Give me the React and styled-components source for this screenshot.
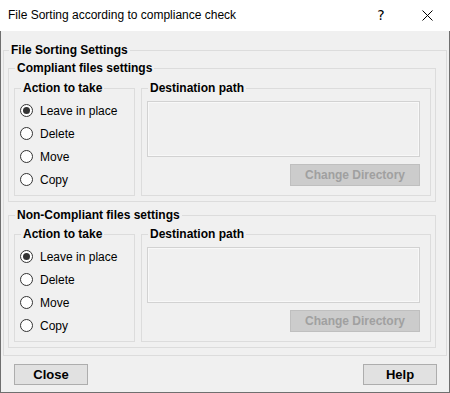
import React from "react";
import styled, { createGlobalStyle } from "styled-components";

const GlobalStyle = createGlobalStyle`
  html, body {
    margin: 0;
    padding: 0;
    background: #f0f0f0;
  }
  body {
    font-family: "Liberation Sans", Arial, sans-serif;
    font-size: 12px;
    color: #000;
  }
`;

export default function App() {
  return (
    <>
      <GlobalStyle />
      <Window>
        <TitleBar>
          <Title>File Sorting according to compliance check</Title>
          <TitleControls>
            <HelpGlyph>?</HelpGlyph>
            <CloseGlyph>
              <svg width="11" height="11" viewBox="0 0 11 11">
                <path d="M0.5 0.5 L10.5 10.5 M10.5 0.5 L0.5 10.5" stroke="#000" strokeWidth="1" fill="none" />
              </svg>
            </CloseGlyph>
          </TitleControls>
        </TitleBar>
        <Body>
          <Group $pad="4px 10px 7px 4px" $mt="12px">
            <Legend>File Sorting Settings</Legend>
            <SettingsGroup title="Compliant files settings" />
            <SettingsGroup title="Non-Compliant files settings" second />
          </Group>
          <Footer>
            <DialogButton>Close</DialogButton>
            <DialogButton>Help</DialogButton>
          </Footer>
        </Body>
      </Window>
    </>
  );
}

function SettingsGroup({ title, second }) {
  const actions = ["Leave in place", "Delete", "Move", "Copy"];
  return (
    <Group $pad={second ? "5px 4px 5px 5px" : "6px 4px 5px 5px"} $mt={second ? "6px" : "0"}>
      <Legend>{title}</Legend>
      <Row>
        <ActionGroup $pad="4px 4px 4px 5px">
          <Legend>Action to take</Legend>
          {actions.map((a, i) => (
            <RadioRow key={a}>
              <RadioCircle $checked={i === 0} />
              <span>{a}</span>
            </RadioRow>
          ))}
        </ActionGroup>
        <DestGroup $pad="6px 10px 4px 5px">
          <Legend>Destination path</Legend>
          <PathBox />
          <ButtonRow>
            <DisabledButton disabled>Change Directory</DisabledButton>
          </ButtonRow>
        </DestGroup>
      </Row>
    </Group>
  );
}

const Window = styled.div`
  width: 450px;
  height: 393px;
  box-sizing: border-box;
  border: 1px solid #6f6f6f;
  border-top: none;
  background: #f0f0f0;
  display: flex;
  flex-direction: column;
`;

const TitleBar = styled.div`
  height: 31px;
  background: #fff;
  display: flex;
  align-items: center;
  justify-content: space-between;
  padding-left: 8px;
  margin: 0 -1px;
`;

const Title = styled.div`
  font-size: 12px;
  color: #000;
  padding-bottom: 1px;
`;

const TitleControls = styled.div`
  display: flex;
  align-items: center;
  height: 100%;
`;

const HelpGlyph = styled.div`
  width: 46px;
  text-align: center;
  font-size: 14px;
  font-family: "DejaVu Sans", sans-serif;
  padding-bottom: 1px;
`;

const CloseGlyph = styled.div`
  width: 46px;
  display: flex;
  justify-content: center;
  align-items: center;
  svg {
    display: block;
  }
`;

const Body = styled.div`
  flex: 1;
  padding: 0 2px;
  display: flex;
  flex-direction: column;
`;

const Group = styled.fieldset`
  margin: ${(p) => p.$mt || 0} 0 0 0;
  padding: ${(p) => p.$pad};
  border: 1px solid #dcdcdc;
  min-width: 0;
  box-sizing: border-box;
`;

const Legend = styled.legend`
  font-weight: bold;
  font-size: 12px;
  line-height: 14px;
  padding: 0 2px;
  margin-left: 1px;
  color: #000;
`;

const Row = styled.div`
  display: flex;
  gap: 6px;
  align-items: stretch;
`;

const ActionGroup = styled(Group)`
  width: 121px;
  flex: none;
  margin: 0;
`;

const DestGroup = styled(Group)`
  flex: 1;
  margin: 0;
  display: flex;
  flex-direction: column;
`;

const RadioRow = styled.div`
  height: 23px;
  display: flex;
  align-items: center;
  gap: 7px;
  font-size: 12px;
`;

const RadioCircle = styled.span`
  width: 13px;
  height: 13px;
  box-sizing: border-box;
  border: 1px solid #333;
  border-radius: 50%;
  background: #fff;
  flex: none;
  display: flex;
  align-items: center;
  justify-content: center;
  &::after {
    content: "";
    display: ${(p) => (p.$checked ? "block" : "none")};
    width: 7px;
    height: 7px;
    border-radius: 50%;
    background: #333;
  }
`;

const PathBox = styled.div`
  height: 56px;
  box-sizing: border-box;
  border: 1px solid #d2d2d2;
  box-shadow: inset 0 0 0 1px #f8f8f8;
  background: #f0f0f0;
`;

const ButtonRow = styled.div`
  display: flex;
  justify-content: flex-end;
  margin-top: 7px;
`;

const DisabledButton = styled.button`
  width: 130px;
  height: 22px;
  box-sizing: border-box;
  border: 1px solid #bfbfbf;
  background: #cccccc;
  color: #a0a0a0;
  font-family: "Liberation Sans", Arial, sans-serif;
  font-weight: bold;
  font-size: 12px;
  padding: 0;
`;

const Footer = styled.div`
  display: flex;
  justify-content: space-between;
  margin-top: 8px;
  padding: 0 10px 0 11px;
`;

const DialogButton = styled.button`
  width: 74px;
  height: 21px;
  box-sizing: border-box;
  border: 1px solid #adadad;
  background: #e1e1e1;
  color: #000;
  font-family: "Liberation Sans", Arial, sans-serif;
  font-weight: bold;
  font-size: 13px;
  padding: 0;
`;
